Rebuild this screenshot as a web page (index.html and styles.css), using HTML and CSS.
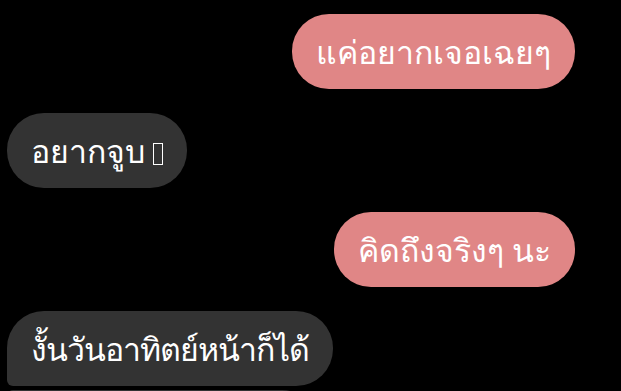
FILE: index.html
```html
<!DOCTYPE html>
<html lang="th">
<head>
    <meta charset="UTF-8">
    <title>แชท</title>
    <link rel="stylesheet" href="styles.css">
</head>
<body>
<div class="chat">
    <div class="msg me">แค่อยากเจอเฉยๆ</div>
    <div class="msg you">อยากจูบ <span class="tofu"></span></div>
    <div class="msg me">คิดถึงจริงๆ นะ</div>
    <div class="msg you first">งั้นวันอาทิตย์หน้าก็ได้</div>
    <div class="msg you next">&nbsp;</div>
</div>
</body>
</html>
```

FILE: styles.css
```css
*{
    padding: 0;
    margin: 0;
}
html,body{
    background: #000;
    height: 100%;
    overflow: hidden;
}
.chat{
    display: flex;
    flex-direction: column;
    gap: 24px;
    padding: 14px 46px 0 7px;
}
.msg{
    height: 75px;
    line-height: 75px;
    padding: 0 24px;
    border-radius: 37px;
    font-family: "Noto Sans", sans-serif;
    font-size: 32px;
    color: #fff;
    white-space: nowrap;
}
.me{
    align-self: flex-end;
    background: #e08686;
}
.you{
    align-self: flex-start;
    background: #333333;
}
.you.first{
    letter-spacing: -1px;
    border-bottom-left-radius: 6px;
}
.you.next{
    width: 264px;
    padding: 0 24px;
    margin-top: -20px;
    border-top-left-radius: 6px;
}
.tofu{
    display: inline-block;
    width: 8px;
    height: 20px;
    border: 1.5px solid #fff;
    vertical-align: -2px;
}
```
